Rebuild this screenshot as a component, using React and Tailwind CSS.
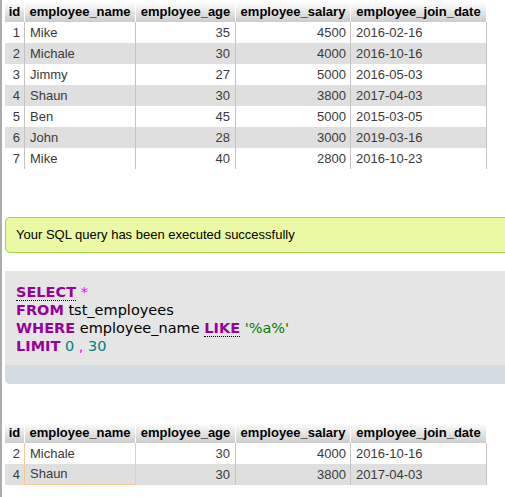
import React from 'react'

const rows = [
  [1, 'Mike', 35, 4500, '2016-02-16'],
  [2, 'Michale', 30, 4000, '2016-10-16'],
  [3, 'Jimmy', 27, 5000, '2016-05-03'],
  [4, 'Shaun', 30, 3800, '2017-04-03'],
  [5, 'Ben', 45, 5000, '2015-03-05'],
  [6, 'John', 28, 3000, '2019-03-16'],
  [7, 'Mike', 40, 2800, '2016-10-23'],
]

const filtered = rows.filter((r) => r[1].includes('a'))

const headers = ['id', 'employee_name', 'employee_age', 'employee_salary', 'employee_join_date']

function ResultTable({ data, markName = false }) {
  return (
    <div className="grid w-[482px] grid-cols-[20px_111px_100px_115px_136px] text-[13px] font-['Liberation_Sans',Arial,sans-serif]">
      {headers.map((h) => (
        <div
          key={h}
          className="flex h-[20px] items-center justify-center whitespace-nowrap border-r border-white bg-linear-to-b from-white to-[#cccccc] font-bold text-black last:border-r-0"
        >
          {h}
        </div>
      ))}
      {data.map((r, i) => {
        const bg = i % 2 === 0 ? 'bg-white' : 'bg-[#dfdfdf]'
        const last = i === data.length - 1
        return (
          <React.Fragment key={r[0]}>
            <div className={`flex h-[21px] items-center justify-end border-r pr-[4px] text-[#3a3a3a] ${bg} ${markName ? 'border-[#fbc98d]' : 'border-[#c4c4c4]'}`}>
              {r[0]}
            </div>
            <div className={`flex h-[21px] items-center border-r pl-[5px] text-[#3a3a3a] ${bg} ${markName ? 'border-[#fbc98d]' : 'border-[#c4c4c4]'} ${markName && last ? 'border-b' : ''}`}>
              {r[1]}
            </div>
            <div className={`flex h-[21px] items-center justify-end border-r border-[#c4c4c4] pr-[5px] text-[#3a3a3a] ${bg}`}>
              {r[2]}
            </div>
            <div className={`flex h-[21px] items-center justify-end border-r border-[#c4c4c4] pr-[4px] text-[#3a3a3a] ${bg}`}>
              {r[3]}
            </div>
            <div className={`flex h-[21px] items-center border-r border-[#c4c4c4] pl-[5px] text-[#3a3a3a] ${bg}`}>
              {r[4]}
            </div>
          </React.Fragment>
        )
      })}
    </div>
  )
}

function Kw({ children, help = false }) {
  return (
    <span className={`font-bold text-[#990099] ${help ? 'border-b border-dotted border-black' : ''}`}>
      {children}
    </span>
  )
}

export default function App() {
  return (
    <div className="min-h-[497px] overflow-x-hidden border-l-2 border-[#acacac] bg-white pl-[3px] pt-[2px]">
      <ResultTable data={rows} />

      {/* success message */}
      <div className="mt-[48px] flex h-[36px] w-[520px] items-center rounded-l-[5px] border border-[#a2d246] bg-[#ebf8a4] pl-[10px] text-[13px] text-black font-['Liberation_Sans',Arial,sans-serif]">
        Your SQL query has been executed successfully
      </div>

      {/* sql box */}
      <div className="mt-[18px] w-[520px] overflow-hidden rounded-bl-[5px] bg-[#e5e5e5]">
        <div className="pb-[10px] pl-[11px] pt-[12px] text-[14.5px] leading-[18px] text-black font-['DejaVu_Sans',Verdana,sans-serif]">
          <div>
            <Kw help>SELECT</Kw> <span className="text-[#ff00ff]">*</span>
          </div>
          <div>
            <Kw>FROM</Kw> tst_employees
          </div>
          <div>
            <Kw>WHERE</Kw> employee_name <Kw help>LIKE</Kw> <span className="text-[#008000]">'%a%'</span>
          </div>
          <div>
            <Kw>LIMIT</Kw> <span className="text-[#008080]">0</span> <span className="text-[#ff00ff]">,</span> <span className="text-[#008080]">30</span>
          </div>
        </div>
        <div className="h-[19px] bg-[#d3dce3]" />
      </div>

      <div className="mt-[39px]">
        <ResultTable data={filtered} markName />
      </div>
    </div>
  )
}
